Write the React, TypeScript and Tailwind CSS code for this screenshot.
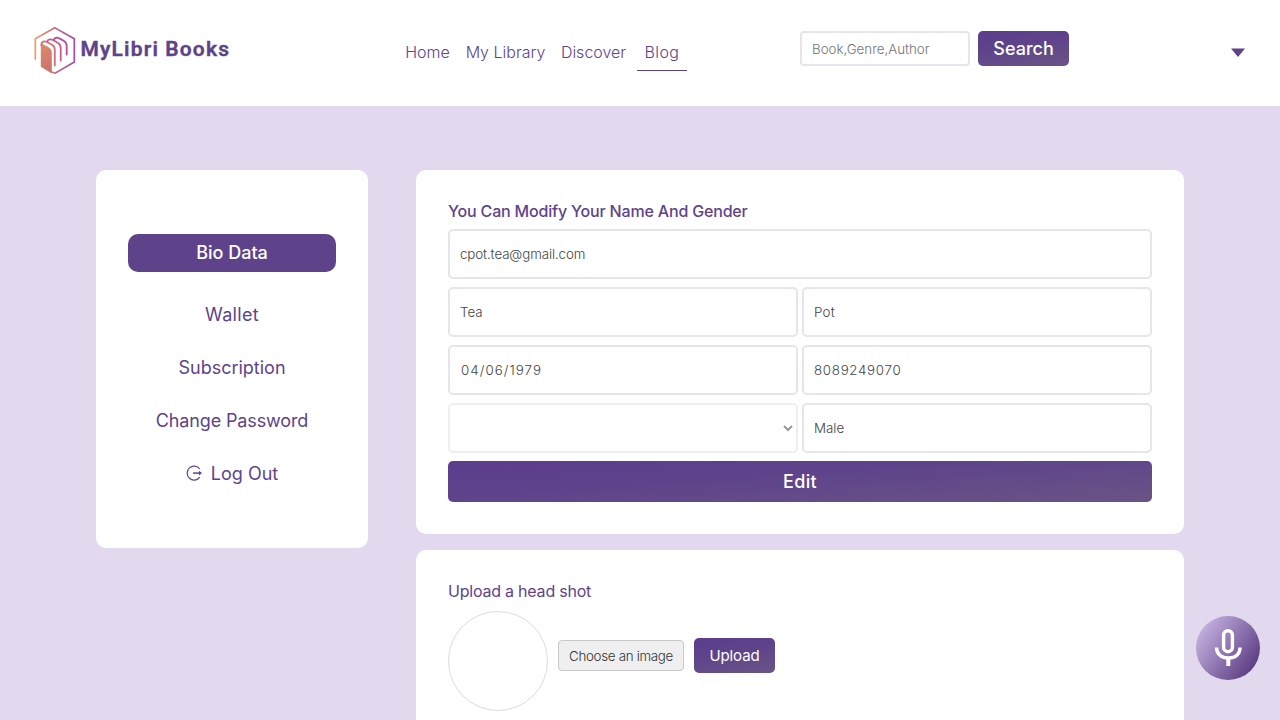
import { ReactNode } from "react";

const gradient = "bg-[linear-gradient(170deg,#5c3d8d_0%,#5e438b_40%,#6a5485_100%)]";
const wideGradient = "bg-[linear-gradient(176deg,#5c3d8d_0%,#5e438b_40%,#6a5485_100%)]";

function Logo() {
  return (
    <svg width="42" height="50" viewBox="0 0 42 50" fill="none">
      <defs>
        <linearGradient id="frame" x1="0" y1="25" x2="42" y2="25" gradientUnits="userSpaceOnUse">
          <stop offset="0" stopColor="#ee9f6c" />
          <stop offset="0.55" stopColor="#c66a86" />
          <stop offset="1" stopColor="#a348ab" />
        </linearGradient>
        <linearGradient id="cover" x1="6" y1="20" x2="18" y2="46" gradientUnits="userSpaceOnUse">
          <stop offset="0" stopColor="#dc8a68" />
          <stop offset="1" stopColor="#c9716e" />
        </linearGradient>
      </defs>
      <path d="M1.300 33V12.700L20.700 1.700L40.300 12.700V36L21 47.200L16.500 45.500" stroke="url(#frame)" strokeWidth="1.7" strokeLinecap="round" strokeLinejoin="round" />
      <path d="M7.600 18.500L13.500 21.500Q17 23.500 17 26.500V46L7.600 40.300Z" fill="url(#cover)" stroke="url(#cover)" strokeWidth="1.6" strokeLinejoin="round" />
      <path d="M7.300 19C7.300 15.500 10.500 14.700 13 16L18 18.800Q20.800 20.500 20.800 24V39.500" stroke="#cf6f7c" strokeWidth="1.8" strokeLinecap="round" />
      <path d="M13.200 15.500C14.200 13 17 13 19.500 14.300L24 17Q26.700 18.700 26.700 22V34.500" stroke="#c85d8b" strokeWidth="1.8" strokeLinecap="round" />
      <path d="M19.800 13.500C21 11.300 23.500 11.300 25.800 12.600L30 15Q32.700 16.700 32.700 20V28.500" stroke="#b84f9b" strokeWidth="1.8" strokeLinecap="round" />
    </svg>
  );
}

function Field({ children, className = "" }: { children?: ReactNode; className?: string }) {
  return (
    <div className={`flex h-[50px] items-center rounded-[5px] border-2 border-[#e5e5eb] bg-white px-[10px] text-[13.33px] font-[350] text-[#444] ${className}`}>
      {children}
    </div>
  );
}

export default function App() {
  return (
    <div className="flex h-[720px] w-[1280px] flex-col overflow-hidden bg-[#e2d9ee] font-['Inter','Liberation_Sans',sans-serif] text-[#5e438b]">
      <header className="flex h-[106px] shrink-0 items-start bg-white">
        <div className="ml-[33.500px] flex w-[363.500px] items-center pt-[26px]">
          <Logo />
          <span className="mb-[5px] ml-[5px] font-['Roboto'] text-[21px] leading-6 font-semibold tracking-[1.15px] whitespace-nowrap [-webkit-text-stroke:0.4px_#5e438b]">MyLibri Books</span>
        </div>
        <nav className="flex w-[403px] pt-[34px] text-center text-[16px] leading-[36px] font-light">
          <a className="w-[61px]">Home</a>
          <a className="w-[95px]">My Library</a>
          <a className="w-[81px]">Discover</a>
          <a className="ml-[3px] h-[37px] w-[50px] border-b border-[#5e438b] tracking-[0.4px]">Blog</a>
        </nav>
        <div className="flex pt-[31px]">
          <div className="flex h-[35px] w-[170px] items-center rounded-[4px] border-2 border-[#e5e5eb] px-[10px] pt-[2px] text-[13.33px] font-[350] text-[#757575]">
            Book,Genre,Author
          </div>
          <button className={`ml-2 h-[35px] w-[91px] rounded-[5px] text-[18px] leading-[35px] font-medium text-white ${gradient}`}>Search</button>
        </div>
        <svg className="mt-[48px] ml-[162px]" width="14" height="10" viewBox="0 0 14 10">
          <path d="M0 0.500H14L7 9Z" fill="#5e438b" />
        </svg>
      </header>

      <main className="flex items-start gap-12 px-24 pt-16">
        <aside className="h-[378px] w-[272px] shrink-0 rounded-[10px] bg-white px-8 pt-16 text-center text-[18px]">
          <div className="h-[38px] rounded-[10px] bg-[#5e438b] leading-[37px] font-medium text-white">Bio Data</div>
          <div className="mt-[16px] leading-[53px]">
            <div className="tracking-[0.33px]">Wallet</div>
            <div>Subscription</div>
            <div className="tracking-[-0.13px]">Change Password</div>
            <div className="flex items-center justify-center">
              <svg className="mr-[8px]" width="17" height="17" viewBox="0 0 17 17" fill="none" stroke="#5e438b" strokeWidth="1.2">
                <path d="M13.800 4A7 7 0 1 0 13.800 12.200" />
                <path d="M7 8.100H14" strokeWidth="1.5" />
                <path d="M13 5.800L16 8.100L13 10.400Z" fill="#5e438b" stroke="none" />
              </svg>
              Log Out
            </div>
          </div>
        </aside>

        <div className="flex w-[768px] shrink-0 flex-col gap-4">
          <section className="h-[364px] rounded-[10px] bg-white px-8 pt-[29px]">
            <h2 className="h-[30px] text-[16px] leading-[25px] font-[450] tracking-[-0.18px]">You Can Modify Your Name And Gender</h2>
            <div className="grid grid-cols-2 gap-x-1 gap-y-2">
              <Field className="col-span-2 pt-[2px] tracking-[-0.1px]">cpot.tea@gmail.com</Field>
              <Field className="pt-[2px]">Tea</Field>
              <Field className="pt-[2px] tracking-[0.3px]">Pot</Field>
              <Field className="pt-[2px] pl-[11px] tracking-[1.05px]">04/06/1979</Field>
              <Field className="pt-[2px] tracking-[0.7px]">8089249070</Field>
              <Field className="justify-end border-[#efeff3] pr-[3px]">
                <svg width="10" height="7" viewBox="0 0 10 7" fill="none" stroke="#999" strokeWidth="2">
                  <path d="M1 1L5 5L9 1" />
                </svg>
              </Field>
              <Field className="pt-[2px]">Male</Field>
            </div>
            <button className={`mt-2 block h-[41px] w-full rounded-[5px] text-[18px] leading-[41px] font-medium tracking-[0.4px] text-white ${wideGradient}`}>Edit</button>
          </section>

          <section className="h-[200px] rounded-t-[10px] bg-white px-8 pt-[29px]">
            <h2 className="h-[32px] text-[16px] leading-[25px] tracking-[-0.22px]">Upload a head shot</h2>
            <div className="flex">
              <div className="size-[100px] rounded-full border border-[#dcdcdc]" />
              <button className="mt-[29px] ml-[10px] h-[31px] w-[126px] rounded-[4px] border border-[#c8c8c8] bg-[#efefef] pt-[2px] text-[13.33px] font-[350] tracking-[-0.3px] text-[#333]">Choose an image</button>
              <button className={`mt-[27px] ml-[10px] h-[35px] w-[81px] rounded-[5px] text-[15px] leading-[34px] tracking-[-0.1px] text-white ${gradient}`}>Upload</button>
            </div>
          </section>
        </div>
      </main>

      <button className="fixed top-[616px] left-[1196px] flex size-16 items-center justify-center rounded-full bg-[linear-gradient(125deg,#cdbbe9_5%,#523178_95%)]">
        <svg className="mb-px" width="28" height="38" viewBox="0 0 28 38" fill="none" stroke="#fff" strokeWidth="3.400">
          <rect x="9.600" y="1.700" width="8.800" height="21" rx="4.400" />
          <path d="M2.500 18.500C2.500 25 7.500 29 14.500 29S26 25 26 18.500" />
          <path d="M14.300 29V37" strokeWidth="4" />
        </svg>
      </button>
    </div>
  );
}
